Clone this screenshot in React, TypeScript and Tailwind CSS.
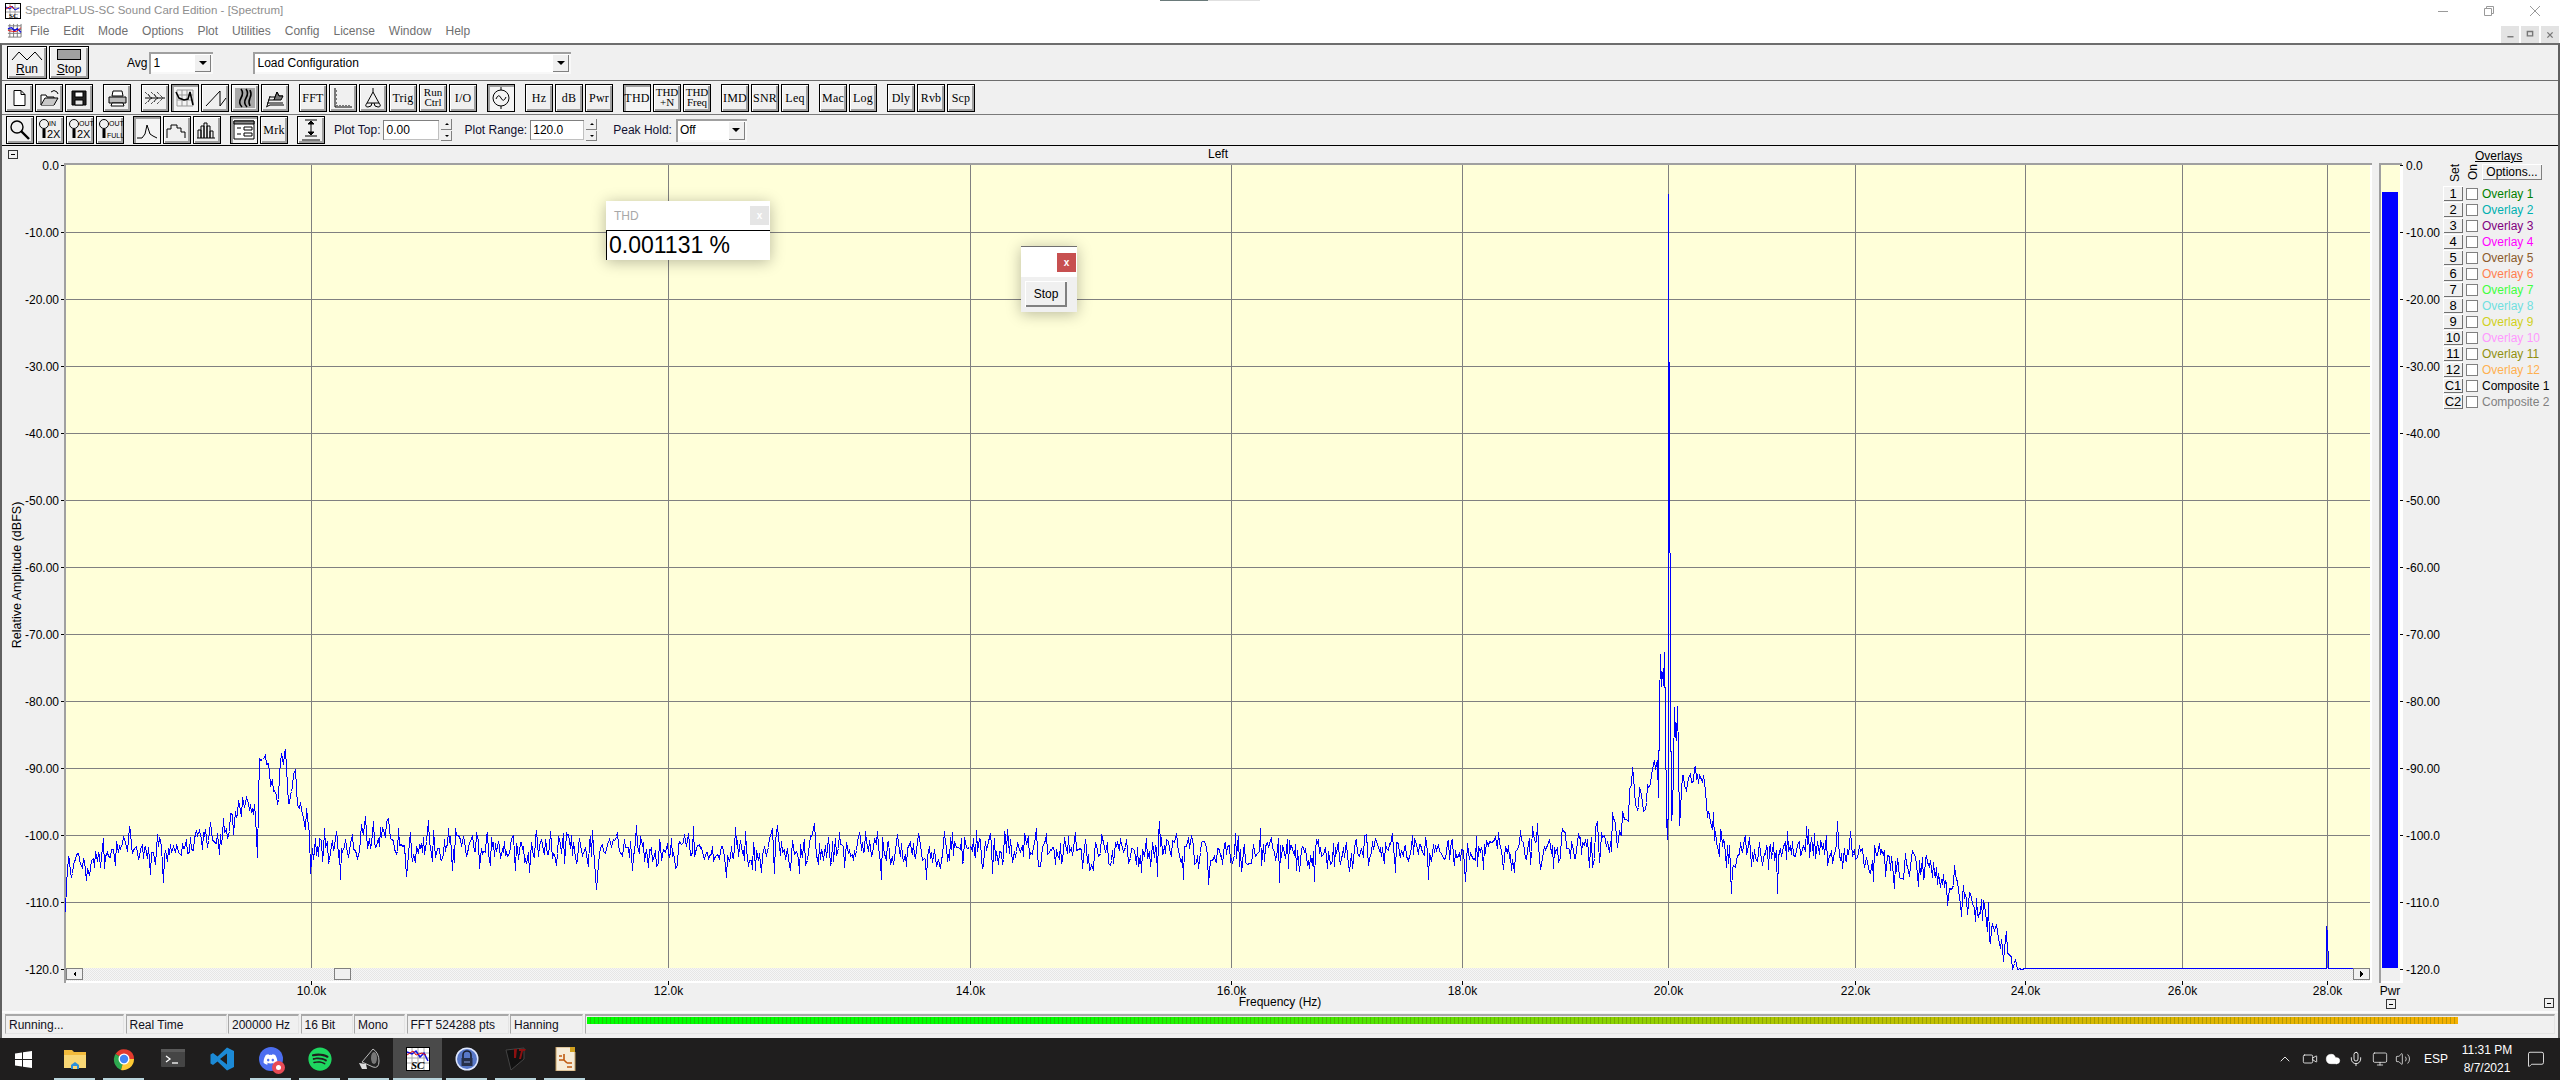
import type { ReactNode } from 'react'
import { ChevronUp, Cloud, Mic, Monitor, Volume2, MessageSquare, Video } from 'lucide-react'
import { FaSpotify, FaDiscord } from 'react-icons/fa'

const dbToY = (db: number) => Math.round(164.5 + 6.7 * Math.abs(db))
const freqToX = (khz: number) => Math.round(310.7 + 4508.5 * Math.log10(khz / 10))

// piecewise envelope of the noise floor, [x px, dB]
const envelope: [number, number][] = [
    [65, -112], [67, -104], [100, -103], [130, -102], [190, -101.5], [225, -100], [230, -98], [240, -96],
    [245, -93], [257, -96], [260, -88], [267, -89.5], [275, -93], [285, -88], [288, -95], [295, -92],
    [298, -98], [305, -97], [310, -102], [320, -100.5], [333, -102], [377, -100.5], [397, -100.5], [417, -102],
    [700, -102.5], [1000, -102], [1300, -102.5], [1560, -102], [1600, -101.5], [1617, -99.5], [1625, -97],
    [1632, -92], [1640, -95], [1650, -92], [1656, -90], [1682, -93], [1687, -91], [1703, -91], [1706, -96],
    [1712, -99], [1722, -100.5], [1730, -103], [1780, -102.5], [1800, -102], [1860, -103], [1880, -103],
    [1893, -105], [1920, -105], [1945, -106.5], [1960, -109], [1975, -111], [1990, -113.5], [2000, -116],
    [2015, -118.5], [2024, -120],
]

const carrier: [number, number][] = [
    [1657, 760], [1658, 797], [1659, 706], [1660, 654], [1661, 686], [1662, 672], [1663, 685], [1664, 652],
    [1665, 720], [1666, 815], [1667, 839], [1668, 800], [1668, 193], [1668, 300], [1669, 420], [1670, 680],
    [1671, 820], [1672, 810], [1673, 770], [1674, 707], [1675, 735], [1676, 740], [1677, 706], [1678, 755],
    [1679, 825], [1680, 810], [1681, 790], [1682, 775],
]

const spikes: Record<number, number> = { 789: -110, 1102: -96, 1837: -98, 1988: -110, 356: -108, 102: -108 }

const envAt = (x: number) => {
    for (let i = 1; i < envelope.length; i++) {
        const [x0, d0] = envelope[i - 1]
        const [x1, d1] = envelope[i]
        if (x <= x1) return d0 + ((d1 - d0) * (x - x0)) / (x1 - x0)
    }
    return -120
}

const buildTrace = () => {
    let seed = 48271
    const rnd = () => {
        seed = (seed * 16807) % 2147483647
        return seed / 2147483647
    }
    const gauss = () => (rnd() + rnd() + rnd() + rnd() - 2) * 1.7
    const pts: string[] = []
    let prev = 0
    let x = 65
    while (x < 2025) {
        if (x >= 1657 && x <= 1682) {
            carrier.forEach(([cx, cy]) => pts.push(`${cx + 0.5} ${cy + 0.5}`))
            x = 1683
            continue
        }
        prev = 0.2 * prev + 1.45 * gauss()
        let db = envAt(x) + prev
        if (rnd() > 0.975) db -= 2 + rnd() * 2
        if (spikes[x]) db = spikes[x]
        db = Math.max(db, -120)
        pts.push(`${x + 0.5} ${dbToY(db) + 0.5}`)
        x += rnd() > 0.7 ? 2 : 1
    }
    pts.push('2025.5 968.5', '2326.5 968.5', '2326.5 926.5', '2327.5 932.5', '2328.5 968.5', '2370 968.5')
    return `M${pts.join(' L')}`
}

const tracePath = buildTrace()

const yLabels = [
    '0.0', '-10.00', '-20.00', '-30.00', '-40.00', '-50.00', '-60.00',
    '-70.00', '-80.00', '-90.00', '-100.0', '-110.0', '-120.0',
]
const xLabels = [10, 12, 14, 16, 18, 20, 22, 24, 26, 28]

const raised = 'border border-black bg-[#f0f0f0] shadow-[inset_1px_1px_0_#ffffff,inset_-2px_-2px_0_#a0a0a0]'
const sunken = 'border border-black bg-[#f4f4f4] shadow-[inset_2px_2px_0_#a0a0a0]'
const serif = "font-['Liberation_Serif',serif]"

const ToolButton = ({ children, pressed }: { children: ReactNode; pressed?: boolean }) => (
    <button className={`flex h-[28px] w-[28px] shrink-0 flex-col items-center justify-center ${pressed ? sunken : raised}`}>
        {children}
    </button>
)

const Label = ({ top, bottom, pressed }: { top: string; bottom?: string; pressed?: boolean }) => (
    <ToolButton pressed={pressed}>
        {bottom ? (
            <>
                <span className={`${serif} text-[11px] leading-[10px] text-black`}>{top}</span>
                <span className={`${serif} text-[11px] leading-[11px] text-black`}>{bottom}</span>
            </>
        ) : (
            <span className={`${serif} text-[12px] leading-none tracking-[0.2px] text-black`}>{top}</span>
        )}
    </ToolButton>
)

const Icon = ({ children }: { children: ReactNode }) => (
    <svg viewBox="0 0 26 26" className="h-[26px] w-[26px]" fill="none" stroke="#000" strokeWidth="1">
        {children}
    </svg>
)

const ComboBox = ({ value, className }: { value: string; className: string }) => (
    <div className={`flex items-center justify-between bg-white pl-[4px] shadow-[inset_2px_2px_0_#a0a0a0,inset_-2px_-2px_0_#f8f8f8] ${className}`}>
        <span className="text-[12px] text-black">{value}</span>
        <div className="mr-[2px] flex h-[calc(100%-4px)] w-[17px] items-center justify-center bg-[#f0f0f0] shadow-[inset_1px_1px_0_#ffffff,inset_-1px_-1px_0_#808080]">
            <div className="h-0 w-0 border-x-[4px] border-t-[4px] border-x-transparent border-t-black" />
        </div>
    </div>
)

const Spinner = () => (
    <div className="flex h-[22px] w-[11px] flex-col gap-[1px]">
        <div className="flex flex-1 items-center justify-center bg-[#f0f0f0] shadow-[inset_-1px_-1px_0_#808080]">
            <div className="h-0 w-0 border-x-[2px] border-b-[2px] border-x-transparent border-b-black" />
        </div>
        <div className="flex flex-1 items-center justify-center bg-[#f0f0f0] shadow-[inset_-1px_-1px_0_#808080]">
            <div className="h-0 w-0 border-x-[2px] border-t-[2px] border-x-transparent border-t-black" />
        </div>
    </div>
)

const NumberBox = ({ value, className }: { value: string; className: string }) => (
    <div className={`flex h-[20px] items-center bg-white pl-[3px] text-[12px] text-black shadow-[inset_1px_1px_0_#808080,inset_-1px_-1px_0_#c0c0c0] ${className}`}>
        {value}
    </div>
)

const ZoomGlass = ({ top, bottom }: { top: string; bottom: string }) => (
    <ToolButton>
        <Icon>
            <circle cx="7" cy="7" r="4.5" />
            <path d="M7 12v9" strokeWidth="3" />
            <text x="12" y="9" fontSize="7" fill="#000" stroke="none" fontFamily="Liberation Sans">{top}</text>
            <text x="10" y="21" fontSize={bottom === 'FULL' ? 7 : 11} fill="#000" stroke="none" fontFamily="Liberation Sans">{bottom}</text>
        </Icon>
    </ToolButton>
)

const TitleBars = () => (
    <>
        <div className="relative flex h-[21px] items-center bg-white pl-[5px]">
            {/* sliver of another window along the top edge */}
            <div className="absolute left-[1160px] top-0 h-px w-[48px] bg-[#6a7a7a]" />
            <div className="absolute left-[1208px] top-0 h-px w-[52px] bg-[#e0e0e0]" />
            <svg viewBox="0 0 16 16" className="h-[16px] w-[16px]">
                <rect x="0.5" y="0.5" width="15" height="15" fill="#fff" stroke="#000" />
                <path d="M1 5h14M1 9h14M5 1v14M10 1v14" stroke="#a0a0a0" />
                <path d="M1 4l4 2 2-3 3 4 4-2" stroke="#1010e0" fill="none" />
                <path d="M1 6l5-3 3 3" stroke="#e01010" fill="none" />
                <text x="4" y="15" fontSize="7" fontWeight="700" fontFamily="Liberation Serif">SC</text>
            </svg>
            <span className="ml-[4px] text-[11.5px] text-[#8e8e8e]">SpectraPLUS-SC Sound Card Edition - [Spectrum]</span>
            <div className="ml-auto flex h-full items-center">
                <svg viewBox="0 0 10 10" className="mr-[36px] h-[10px] w-[10px]" stroke="#9a9a9a" fill="none"><path d="M0 5.5h10" /></svg>
                <svg viewBox="0 0 10 10" className="mr-[36px] h-[10px] w-[10px]" stroke="#9a9a9a" fill="none"><path d="M.5 2.5h7v7h-7zM2.5 2.5v-2h7v7h-2" /></svg>
                <svg viewBox="0 0 10 10" className="mr-[20px] h-[10px] w-[10px]" stroke="#9a9a9a" fill="none"><path d="M0 0l10 10M10 0L0 10" /></svg>
            </div>
        </div>
        <div className="flex h-[22px] items-start bg-white pl-[7px]">
            <svg viewBox="0 0 16 16" className="mt-[2px] h-[15px] w-[15px]">
                <path d="M1 3h14M1 7h14M1 11h14M1 15h14M3 1v14M7 1v14M11 1v14M15 1v14" stroke="#777" />
                <path d="M1 6l4-1 3 3 3-2 4 4" stroke="#1010e0" strokeWidth="1.5" fill="none" />
                <path d="M1 8l5 1 4 0 5-4" stroke="#e01010" fill="none" />
            </svg>
            <nav className="ml-[8px] flex gap-[14px] pt-[3px] text-[12px] leading-[15px] text-[#6f6f6f]">
                {['File', 'Edit', 'Mode', 'Options', 'Plot', 'Utilities', 'Config', 'License', 'Window', 'Help'].map(m => (
                    <span key={m}>{m}</span>
                ))}
            </nav>
            <div className="ml-auto flex h-[17px] gap-[2px] self-end pr-[1px]">
                {['M5 10h7', 'M5 4h6v5H5z', 'M5 5l6 6M11 5l-6 6'].map(d => (
                    <div key={d} className="flex w-[18px] items-center justify-center bg-[#e3e3e3]">
                        <svg viewBox="0 0 16 16" className="h-[14px] w-[14px]" stroke="#777" strokeWidth="1.6" fill="none"><path d={d} /></svg>
                    </div>
                ))}
            </div>
        </div>
    </>
)

const RunRow = () => (
    <div className="flex h-[36px] items-center border-b border-[#6d6d6d] pl-[3px]">
        <button className={`ml-[2px] flex h-[33px] w-[40px] flex-col items-center justify-between py-[2px] ${raised}`}>
            <svg viewBox="0 0 32 14" className="h-[14px] w-[32px]" fill="none" stroke="#000"><path d="M1 11 L8 3 L16 11 L24 3 L31 11" /></svg>
            <span className="text-[12px] leading-[13px] text-black"><u>R</u>un</span>
        </button>
        <button className={`ml-[2px] flex h-[33px] w-[40px] flex-col items-center justify-between py-[2px] ${raised}`}>
            <div className="h-[11px] w-[24px] border border-black bg-[#a0a0a0]" />
            <span className="text-[12px] leading-[13px] text-black"><u>S</u>top</span>
        </button>
        <span className="ml-[38px] text-[12px] text-black">Avg</span>
        <ComboBox value="1" className="ml-[2px] h-[22px] w-[64px]" />
        <ComboBox value="Load Configuration" className="ml-[40px] h-[22px] w-[318px]" />
    </div>
)

const IconRow = () => (
    <div className="flex h-[34px] items-center gap-[10px] border-b border-[#7a7a7a] pl-[3px]">
        <div className="flex gap-[2px]">
            <ToolButton><Icon><path d="M8 5.5h7l4 4v11H8zM15 5.5v4h4" fill="#fff" /></Icon></ToolButton>
            <ToolButton><Icon><path d="M5 20V10h5l1 2h7v8z" fill="#fff" /><path d="M5 20l4-7h13l-4 7" fill="#c8c8c8" /><path d="M15 7q3-3 6 0l1 2" /></Icon></ToolButton>
            <ToolButton><Icon><path d="M6 6h14v14H6z" fill="#222" /><path d="M9 7h8v5H9z" fill="#fff" /><path d="M9 15h8v5H9z" fill="#e8e8e8" /></Icon></ToolButton>
        </div>
        <ToolButton><Icon><path d="M9 6h9l1 5H8z" fill="#fff" /><path d="M5 12h17v6H5z" fill="#bbb" /><path d="M8 18h11l1 3H7z" fill="#fff" /></Icon></ToolButton>
        <div className="flex gap-[2px]">
            <ToolButton><Icon><path d="M3 13h20" /><path d="M3 7l6 6-6 6M9 7l6 6-6 6M15 7l6 6-6 6M6 9l4 4-4 4M12 9l4 4-4 4" strokeDasharray="1 1" /></Icon></ToolButton>
            <ToolButton pressed><Icon><path d="M5 5h16v16H5zM5 10h16M5 15h16M10 5v16M15 5v16" stroke="#999" /><path d="M4 7l3 6 5 2 4-1 2-7 3 13" strokeWidth="1.6" /></Icon></ToolButton>
            <ToolButton><Icon><path d="M4 21L18 6v15L24 13" /></Icon></ToolButton>
            <ToolButton>
                <Icon>
                    <rect x="3" y="3" width="20" height="20" fill="#a8a8a8" stroke="none" />
                    <path d="M9 4q3 4 0 9t1 9M14 4q3 4 0 9t1 9M18 5q2 4 0 8t0 8" strokeWidth="1.6" />
                </Icon>
            </ToolButton>
            <ToolButton><Icon><path d="M4 22l4-2h14M5 18h16M6 15h6l3-8 2 4h4M8 12h5M5 21l3-10" /><path d="M12 15l3-8 2 4 4 0-2 4z" fill="#777" /></Icon></ToolButton>
        </div>
        <div className="flex gap-[2px]">
            <Label top="FFT" />
            <ToolButton><Icon><path d="M5 3v19h17" /><path d="M7 21v-1M10 21v-1M13 21v-1M16 21v-1M19 21v-1M6 6h1M6 10h1M6 14h1M6 18h1" /></Icon></ToolButton>
            <ToolButton><Icon><path d="M13 3v4M7 18l6-11 6 11zM7 18q-3 4 1 4t4-4M19 18q3 4-1 4t-4-4" /></Icon></ToolButton>
            <Label top="Trig" />
            <Label top="Run" bottom="Ctrl" />
            <Label top="I/O" />
        </div>
        <ToolButton pressed><Icon><circle cx="13" cy="13" r="8" /><path d="M13 2v3M13 21v3" /><path d="M8 14q2.5-6 5 -1t5-1" /></Icon></ToolButton>
        <div className="flex gap-[2px]">
            <Label top="Hz" />
            <Label top="dB" />
            <Label top="Pwr" />
        </div>
        <div className="flex gap-[2px]">
            <Label top="THD" pressed />
            <Label top="THD" bottom="+N" />
            <Label top="THD" bottom="Freq" />
        </div>
        <div className="flex gap-[2px]">
            <Label top="IMD" />
            <Label top="SNR" />
            <Label top="Leq" />
        </div>
        <div className="flex gap-[2px]">
            <Label top="Mac" />
            <Label top="Log" />
        </div>
        <div className="flex gap-[2px]">
            <Label top="Dly" />
            <Label top="Rvb" />
            <Label top="Scp" />
        </div>
    </div>
)

const PlotRow = () => (
    <div className="flex h-[31px] items-center border-b border-black pl-[4px]">
        <div className="flex gap-[2px]">
            <ToolButton><Icon><circle cx="10" cy="10" r="6" strokeWidth="1.4" /><path d="M14 14l8 8" strokeWidth="2.4" /></Icon></ToolButton>
            <ZoomGlass top="IN" bottom="2X" />
            <ZoomGlass top="OUT" bottom="2X" />
            <ZoomGlass top="OUT" bottom="FULL" />
        </div>
        <div className="ml-[9px] flex gap-[2px]">
            <ToolButton pressed><Icon><path d="M3 21h5l3-4 2-9 3 9 3 2 4 2" /></Icon></ToolButton>
            <ToolButton><Icon><path d="M3 21v-9h4v-4h6v3h4v4h4v6" /></Icon></ToolButton>
            <ToolButton><Icon><path d="M4 21v-8h3v8M7 21V9h3v12M10 21V6h3v15M13 21V9h3v12M16 21v-7h3v7M3 21h18" /></Icon></ToolButton>
        </div>
        <div className="ml-[9px] flex gap-[2px]">
            <ToolButton pressed><Icon><path d="M3 4h20v18H3z" fill="#fff" /><path d="M3 4h20v3H3z" fill="#888" /><path d="M13 10h8v3h-8zM13 16h8v3h-8zM6 11h4M6 17h4" /></Icon></ToolButton>
            <Label top="Mrk" />
        </div>
        <div className="ml-[9px]">
            <ToolButton><Icon><path d="M7 3h12M7 19h12M4 23h18M13 4v14" /><path d="M10 7l3-3 3 3zM10 15l3 3 3-3z" fill="#000" /></Icon></ToolButton>
        </div>
        <span className="ml-[9px] text-[12px] text-[#101030]">Plot Top:</span>
        <NumberBox value="0.00" className="ml-[3px] w-[56px]" />
        <div className="ml-[2px]"><Spinner /></div>
        <span className="ml-[12px] text-[12px] text-[#101030]">Plot Range:</span>
        <NumberBox value="120.0" className="ml-[3px] w-[54px]" />
        <div className="ml-[2px]"><Spinner /></div>
        <span className="ml-[16px] text-[12px] text-[#101030]">Peak Hold:</span>
        <ComboBox value="Off" className="ml-[4px] h-[23px] w-[71px]" />
    </div>
)

const Chart = () => (
    <svg viewBox="2 146 2373 865" className="h-[865px] w-[2373px] shrink-0 font-['Liberation_Sans',sans-serif]">
        <defs>
            <pattern id="dither" width="2" height="2" patternUnits="userSpaceOnUse">
                <rect width="2" height="2" fill="#f6f6f6" />
                <rect width="1" height="1" fill="#e6e6e6" />
                <rect x="1" y="1" width="1" height="1" fill="#e6e6e6" />
            </pattern>
        </defs>
        <rect x="8.5" y="150.5" width="9" height="8" fill="#f0f0f0" stroke="#333" />
        <path d="M11 154.5h4" stroke="#000" />
        <text x="1218" y="158" fontSize="12" textAnchor="middle" fill="#000">Left</text>
        <text transform="translate(21 575) rotate(-90)" fontSize="12.5" textAnchor="middle" fill="#000">Relative Amplitude (dBFS)</text>

        <rect x="66" y="165" width="2306" height="818" fill="#ffffff" />
        <rect x="66" y="165" width="2304" height="803" fill="#ffffd9" />
        <rect x="66" y="968" width="2304" height="13" fill="url(#dither)" />
        <rect x="64" y="163" width="2308" height="2" fill="#a0a0a0" />
        <rect x="64" y="163" width="2" height="820" fill="#a0a0a0" />

        <g shapeRendering="crispEdges" stroke="#808080">
            {yLabels.slice(1, -1).map((_, i) => (
                <path key={i} d={`M66 ${dbToY((i + 1) * 10) + 0.5}H2370`} />
            ))}
            {xLabels.map(k => (
                <path key={k} d={`M${freqToX(k) + 0.5} 165V968`} />
            ))}
        </g>
        <path d={tracePath} fill="none" stroke="#0000ff" strokeWidth="1" shapeRendering="crispEdges" />

        <g shapeRendering="crispEdges">
            <rect x="66.5" y="968.5" width="16" height="11" fill="#f0f0f0" stroke="#808080" />
            <path d="M76 971v6l-3-3z" fill="#000" />
            <rect x="334.5" y="968.5" width="16" height="11" fill="#f0f0f0" stroke="#808080" />
            <rect x="2353.5" y="968.5" width="16" height="11" fill="#f0f0f0" stroke="#808080" />
            <path d="M2360 971v6l3-3z" fill="#000" />
        </g>

        {yLabels.map((t, i) => (
            <g key={t}>
                <path d={`M61 ${dbToY(i * 10) + 0.5}h3`} stroke="#000" shapeRendering="crispEdges" />
                <text x="59" y={dbToY(i * 10) + 5} fontSize="12" textAnchor="end" fill="#000">{t}</text>
            </g>
        ))}
        {xLabels.map(k => (
            <g key={k}>
                <path d={`M${freqToX(k) + 0.5} 981v4`} stroke="#000" shapeRendering="crispEdges" />
                <text x={freqToX(k) + 0.5} y="995" fontSize="12" textAnchor="middle" fill="#000">{k.toFixed(1)}k</text>
            </g>
        ))}
        <text x="1280" y="1006" fontSize="12" textAnchor="middle" fill="#000">Frequency (Hz)</text>
    </svg>
)

const Meter = () => (
    <svg viewBox="2375 146 68 865" className="h-[865px] w-[68px] shrink-0 font-['Liberation_Sans',sans-serif]">
        <rect x="2379" y="163" width="24" height="820" fill="#ffffff" />
        <rect x="2381" y="165" width="19" height="803" fill="#ffffd9" />
        <rect x="2381" y="968" width="19" height="13" fill="#f0f0f0" />
        <rect x="2379" y="163" width="23" height="2" fill="#a0a0a0" />
        <rect x="2379" y="163" width="2" height="820" fill="#a0a0a0" />
        <rect x="2382" y="192" width="16" height="776" fill="#0000ff" />
        {yLabels.map((t, i) => (
            <g key={t}>
                <path d={`M2400 ${dbToY(i * 10) + 0.5}h3`} stroke="#000" shapeRendering="crispEdges" />
                <text x="2406" y={dbToY(i * 10) + 5} fontSize="12" fill="#000">{t}</text>
            </g>
        ))}
        <text x="2390" y="995" fontSize="12" textAnchor="middle" fill="#000">Pwr</text>
        <rect x="2386.5" y="999.5" width="9" height="9" fill="#f0f0f0" stroke="#333" />
        <path d="M2389 1004.5h4" stroke="#000" />
    </svg>
)

const overlays: [string, string, string][] = [
    ['1', 'Overlay 1', 'text-[#008000]'],
    ['2', 'Overlay 2', 'text-[#00b0b0]'],
    ['3', 'Overlay 3', 'text-[#800080]'],
    ['4', 'Overlay 4', 'text-[#ff00ff]'],
    ['5', 'Overlay 5', 'text-[#8b5a2b]'],
    ['6', 'Overlay 6', 'text-[#ff8050]'],
    ['7', 'Overlay 7', 'text-[#40ff40]'],
    ['8', 'Overlay 8', 'text-[#70e0e0]'],
    ['9', 'Overlay 9', 'text-[#d0d020]'],
    ['10', 'Overlay 10', 'text-[#ff99ff]'],
    ['11', 'Overlay 11', 'text-[#909010]'],
    ['12', 'Overlay 12', 'text-[#ffb050]'],
    ['C1', 'Composite 1', 'text-black'],
    ['C2', 'Composite 2', 'text-[#808080]'],
]

const OverlayPanel = () => (
    <div className="flex h-[865px] flex-1 flex-col text-[12px]">
        <div className="mt-[3px] pl-[32px] leading-[14px] text-black"><u>Overlays</u></div>
        <div className="mt-[1px] flex h-[21px] items-start">
            <span className="ml-[3px] w-[18px] text-center leading-[18px] [writing-mode:vertical-rl] rotate-180">Set</span>
            <span className="ml-[0px] w-[18px] text-center leading-[18px] [writing-mode:vertical-rl] rotate-180">On</span>
            <button className="flex h-[16px] w-[60px] items-center justify-center bg-[#f0f0f0] text-black shadow-[inset_1px_1px_0_#ffffff,inset_-1px_-1px_0_#808080]">Options...</button>
        </div>
        <div className="mt-[1px] flex flex-col gap-[1px]">
            {overlays.map(([set, name, color]) => (
                <div key={set} className="flex h-[15px] items-center">
                    <button className="flex h-[15px] w-[20px] items-center justify-center bg-[#f0f0f0] text-[13px] leading-none text-black shadow-[inset_1px_1px_0_#ffffff,inset_-1px_-1px_0_#707070]">{set}</button>
                    <div className="ml-[3px] h-[12px] w-[12px] border border-[#808080] bg-white" />
                    <span className={`ml-[4px] leading-none ${color}`}>{name}</span>
                </div>
            ))}
        </div>
        <div className="mt-auto mb-[3px] ml-[101px] flex h-[10px] w-[10px] items-center justify-center border border-[#333]">
            <div className="h-px w-[4px] bg-black" />
        </div>
    </div>
)

const statusCells: [string, string][] = [
    ['Running...', 'w-[119px]'],
    ['Real Time', 'w-[101px]'],
    ['200000 Hz', 'w-[71px]'],
    ['16 Bit', 'w-[52px]'],
    ['Mono', 'w-[51px]'],
    ['FFT 524288 pts', 'w-[102px]'],
    ['Hanning', 'w-[73px]'],
]

const StatusBar = () => (
    <div className="flex h-[27px] items-start gap-[1.5px] border-t-2 border-[#fbfbfb] pl-[3px] pt-[1px]">
        {statusCells.map(([text, w]) => (
            <div key={text} className={`flex h-[20px] shrink-0 items-center border-t-2 border-l border-r border-b border-t-[#a8a8a8] border-l-[#a8a8a8] border-r-[#e4e4e4] border-b-[#e4e4e4] pl-[3px] text-[12px] text-[#101020] ${w}`}>
                {text}
            </div>
        ))}
        <div className="h-[20px] w-[1970px] shrink-0 border-t-2 border-l border-r border-b border-t-[#a8a8a8] border-l-[#a8a8a8] border-r-[#e4e4e4] border-b-[#e4e4e4] pl-[1px] pt-[1px]">
            <div className="h-[7px] w-[1871px] [background:repeating-linear-gradient(90deg,transparent_0,transparent_3px,rgba(70,90,0,0.3)_3px,rgba(70,90,0,0.3)_4px),linear-gradient(90deg,#00ff00_0%,#00ff00_25%,#60e000_45%,#a8c800_62%,#d4b800_80%,#f4b000_100%)]" />
        </div>
    </div>
)

const Slot = ({ children, open, active }: { children: ReactNode; open?: boolean; active?: boolean }) => (
    <div className={`relative flex h-full w-[49px] shrink-0 items-center justify-center ${active ? 'bg-[#4a4a4a]' : ''}`}>
        {children}
        {open && <div className={`absolute bottom-0 h-[2px] bg-[#b8d4dc] ${active ? 'inset-x-0' : 'inset-x-[4px]'}`} />}
    </div>
)

const Taskbar = () => (
    <div className="flex h-[42px] items-center bg-[#1f1e1e] text-white">
        <div className="flex h-full w-[50px] items-center justify-center pr-[3px]">
            <svg viewBox="0 0 17 17" className="h-[17px] w-[17px]" fill="#fff">
                <path d="M0 2.4L7 1.4V8H0zM8 1.2L17 0V8H8zM0 9h7v6.6l-7-1zM8 9h9v8l-9-1.2z" />
            </svg>
        </div>
        <Slot open>
            <svg viewBox="0 0 24 24" className="h-[24px] w-[24px]">
                <path d="M1 3h8l2 2h12v16H1z" fill="#f2bb3c" />
                <path d="M1 8h22v13H1z" fill="#f8d775" />
                <path d="M8 18l4-3 4 3v4H8z" fill="#2c8fd8" />
                <rect x="10" y="19" width="4" height="3" fill="#f8d775" />
            </svg>
        </Slot>
        <Slot open>
            <svg viewBox="0 0 24 24" className="h-[24px] w-[24px]">
                <path d="M12 12L3.5 7A10 10 0 0 1 22 12z" fill="#e33b2e" />
                <path d="M12 12l-8.5-5A11 11 0 0 0 9 23z" fill="#2da94f" />
                <path d="M12 12h10A11 11 0 0 1 9 23z" fill="#fcc934" />
                <circle cx="12" cy="12" r="5.5" fill="#fff" />
                <circle cx="12" cy="12" r="4.2" fill="#4285f4" />
            </svg>
        </Slot>
        <Slot>
            <svg viewBox="0 0 24 20" className="h-[20px] w-[24px]">
                <rect width="24" height="18" rx="1" fill="#454545" />
                <rect width="24" height="3" fill="#5a5a5a" />
                <path d="M5 7l4 3-4 3" stroke="#fff" strokeWidth="1.3" fill="none" />
                <path d="M11 14h6" stroke="#fff" strokeWidth="1.3" />
            </svg>
        </Slot>
        <Slot>
            <svg viewBox="0 0 24 24" className="h-[24px] w-[24px]">
                <path fillRule="evenodd" d="M17 0.5L24 4V20L17 23.5L7.5 14.5L3 18L0.5 16.5V7.5L3 6L7.5 9.5ZM17 6.5L10 12L17 17.5Z" fill="#1c8ad6" />
            </svg>
        </Slot>
        <Slot open>
            <div className="relative flex h-[24px] w-[24px] items-center justify-center rounded-full bg-[#4c6ef0]">
                <FaDiscord className="h-[15px] w-[15px] text-white" />
                <div className="absolute -bottom-[3px] -right-[2px] flex h-[13px] w-[13px] items-center justify-center rounded-full bg-[#e84a55]">
                    <div className="h-[5px] w-[5px] rounded-full bg-white" />
                </div>
            </div>
        </Slot>
        <Slot open><FaSpotify className="h-[24px] w-[24px] text-[#1ed760]" /></Slot>
        <Slot open>
            <svg viewBox="0 0 24 24" className="h-[24px] w-[24px]">
                <path d="M5 15l11-13q6 4 6 12t-6 6z" fill="#222" stroke="#bbb" />
                <ellipse cx="17" cy="11" rx="3" ry="6" fill="#777" />
                <path d="M2 16l7 1 1 5-5 0z" fill="#ddd" />
            </svg>
        </Slot>
        <Slot open active>
            <svg viewBox="0 0 24 24" className="h-[24px] w-[24px]">
                <rect x="0.5" y="0.5" width="23" height="23" fill="#fff" stroke="#000" />
                <path d="M1 6h22M1 11h22M1 16h22M6 1v22M12 1v22M18 1v22" stroke="#a8a8a8" />
                <path d="M1 5l5 2 4-3 4 6 4-4 4 8" stroke="#1010e0" strokeWidth="1.5" fill="none" />
                <path d="M1 8l6-4 3 4 6-2 4 2" stroke="#e01010" fill="none" />
                <text x="5" y="22" fontSize="11" fontStyle="italic" fontWeight="700" fontFamily="Liberation Serif">SC</text>
            </svg>
        </Slot>
        <Slot open>
            <svg viewBox="0 0 24 24" className="h-[24px] w-[24px]">
                <circle cx="12" cy="12" r="11.5" fill="#dfe8ff" />
                <circle cx="12" cy="12" r="10" fill="#5878c8" />
                <path d="M8 11V8a4 4 0 0 1 8 0v3" stroke="#1a2030" strokeWidth="1.6" fill="none" />
                <rect x="6.5" y="11" width="11" height="8" fill="#26304a" />
                <path d="M9 15h6" stroke="#8aa0e0" />
            </svg>
        </Slot>
        <Slot open>
            <svg viewBox="0 0 24 24" className="h-[24px] w-[24px]">
                <path d="M2 3l5 20L20 12V1z" fill="#111" stroke="#444" />
                <path d="M10 2h3l-1 9h-2zM15 2h7l-1 2h-2l-2 8h-2l2-8h-2z" fill="#8b1010" />
            </svg>
        </Slot>
        <Slot open>
            <svg viewBox="0 0 24 24" className="h-[24px] w-[24px]">
                <path d="M3 0h14l5 5v19H3z" fill="#f6ecd8" stroke="#c8a060" />
                <path d="M17 0h5v5h-5z" fill="#d0a020" />
                <path d="M6 13h5M11 13V7M11 13l3 3M14 16h5M14 20h5M6 9h3" stroke="#c05a10" strokeWidth="1.6" fill="none" />
            </svg>
        </Slot>
        <div className="ml-auto flex h-full items-center">
            <ChevronUp className="mr-[9px] h-[16px] w-[16px]" strokeWidth={1.3} />
            <Video className="mr-[7px] h-[16px] w-[16px]" strokeWidth={1.2} />
            <Cloud className="mr-[7px] h-[16px] w-[16px] fill-white" strokeWidth={1} />
            <Mic className="mr-[8px] h-[16px] w-[16px]" strokeWidth={1.3} />
            <Monitor className="mr-[7px] h-[16px] w-[16px]" strokeWidth={1.1} />
            <Volume2 className="mr-[13px] h-[16px] w-[16px]" strokeWidth={1.1} />
            <span className="mr-[14px] text-[12px]">ESP</span>
            <div className="mr-[15px] flex w-[50px] flex-col items-center text-[12px] leading-[18px]">
                <span className="whitespace-nowrap">11:31 PM</span>
                <span className="whitespace-nowrap">8/7/2021</span>
            </div>
            <MessageSquare className="mr-[15px] h-[18px] w-[18px]" strokeWidth={1.1} />
        </div>
    </div>
)

const App = () => {
    return (
        <div className="relative flex h-[1080px] w-[2560px] flex-col overflow-hidden bg-[#f0f0f0] font-['Liberation_Sans',sans-serif]">
            <TitleBars />
            <div className="flex flex-1 flex-col border-x-2 border-x-[#606060] border-t-2 border-t-[#6d6d6d]">
                <RunRow />
                <IconRow />
                <PlotRow />
                <div className="flex">
                    <Chart />
                    <Meter />
                    <OverlayPanel />
                </div>
                <StatusBar />
            </div>
            <Taskbar />

            {/* floating meter windows */}
            <div className="absolute left-[606px] top-[201px] w-[164px] bg-white shadow-[0_2px_14px_rgba(0,0,0,0.28)]">
                <div className="flex h-[30px] items-center justify-between border-b border-black pl-[8px] pr-[1px]">
                    <span className="text-[12px] text-[#a8a8a8]">THD</span>
                    <div className="flex h-[19px] w-[19px] items-center justify-center bg-[#e5e5e5] text-[10px] font-bold text-white">x</div>
                </div>
                <div className="h-[29px] border-l border-black pl-[2px] text-[23px] leading-[29px] text-black">0.001131 %</div>
            </div>
            <div className="absolute left-[1021px] top-[246px] w-[56px] bg-[#f0f0f0] shadow-[0_2px_14px_rgba(0,0,0,0.28)]">
                <div className="flex h-[31px] items-center justify-end border-t border-[#707070] bg-white pr-[1px]">
                    <div className="flex h-[19px] w-[19px] items-center justify-center bg-[#c75050] text-[10px] font-bold text-white">x</div>
                </div>
                <div className="px-[4px] pb-[5px] pt-[4px]">
                    <button className="flex h-[26px] w-[42px] items-center justify-center bg-[#f0f0f0] text-[12px] text-black shadow-[inset_1px_1px_0_#ffffff,inset_-2px_-2px_0_#808080,inset_0_0_0_1px_#e0e0e0]">Stop</button>
                </div>
            </div>
        </div>
    )
}

export default App
